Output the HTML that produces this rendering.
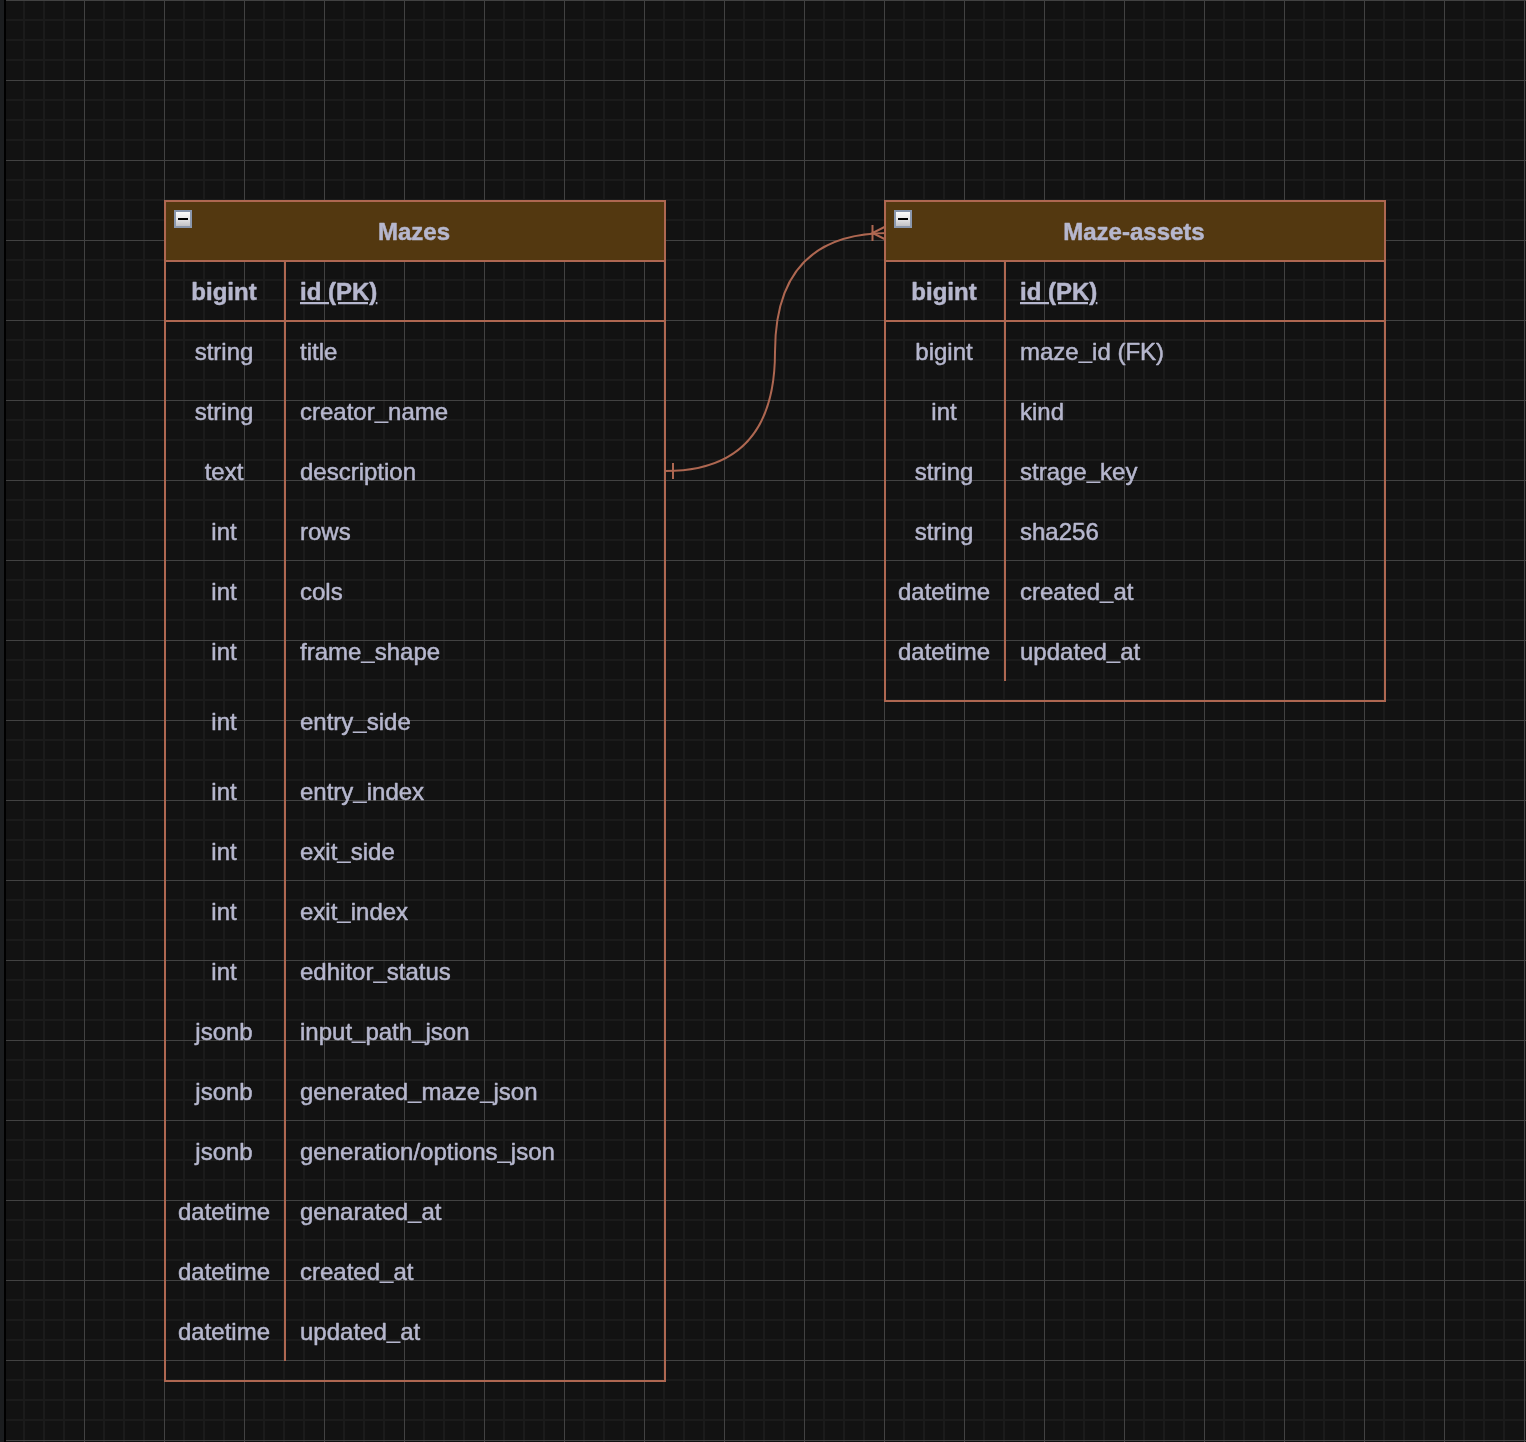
<!DOCTYPE html>
<html><head><meta charset="utf-8"><title>ER</title>
<style>
html,body{margin:0;padding:0;background:#121212;width:1526px;height:1442px;overflow:hidden}
svg{display:block;position:absolute;left:0;top:0;will-change:transform}
text{font-family:"Liberation Sans",sans-serif;font-size:24px;fill:#b6b7ce;stroke:#b6b7ce;stroke-width:0.5px;stroke-linejoin:round}
</style></head><body>
<svg width="1526" height="1442" viewBox="0 0 1526 1442">
<defs>
<pattern id="grid" x="4" y="0" width="80" height="80" patternUnits="userSpaceOnUse">
<path d="M0 20H80M0 40H80M0 60H80M20 0V80M40 0V80M60 0V80" fill="none" stroke="#424242" stroke-width="2" opacity="0.2" shape-rendering="crispEdges"/>
<path d="M0 0.5H80M0.5 0V80" fill="none" stroke="#424242" stroke-width="1" shape-rendering="crispEdges"/>
</pattern>
<linearGradient id="ig" x1="0" y1="0" x2="0" y2="1"><stop offset="0" stop-color="#fbfbfb"/><stop offset="0.45" stop-color="#e9e9ea"/><stop offset="1" stop-color="#c2c2c6"/></linearGradient>
</defs>
<rect x="0" y="0" width="1526" height="1442" fill="#121212"/>
<rect x="0" y="0" width="1526" height="1442" fill="url(#grid)"/>
<rect x="0" y="0" width="4" height="1442" fill="#1b1d1f"/>
<rect x="4" y="0" width="2" height="1442" fill="#000"/>
<g fill="none" stroke="#ae6751" stroke-width="2">
<path d="M665 471Q775 471 775 352Q775 233 888.5 233"/>
<path d="M673 463V479"/>
<path d="M872.5 225V241M888.5 225L872.5 233L888.5 241"/>
</g>
<rect x="165" y="201" width="500" height="60" fill="#533810" stroke="none"/>
<rect x="165" y="201" width="500" height="1180" fill="none" stroke="#ae6751" stroke-width="2"/>
<path d="M165 261H665M165 321H665M285 261V1361" fill="none" stroke="#ae6751" stroke-width="2"/>
<g transform="translate(174,210)"><rect x="0" y="0" width="18" height="18" fill="#8a97ad"/><rect x="2" y="2" width="14" height="14" fill="url(#ig)"/><rect x="4" y="8" width="10" height="2" fill="#000"/></g>
<text x="414.0" y="240" text-anchor="middle" font-weight="bold">Mazes</text>
<text x="224" y="300" text-anchor="middle" font-weight="bold">bigint</text>
<text x="300" y="300" font-weight="bold">id (PK)</text>
<path d="M300 302h29v2.3h-29zM338 302h30v2.3h-30zM375.8 302h1.6v2.3h-1.6z" fill="#b6b7ce"/>
<text x="224" y="360" text-anchor="middle">string</text>
<text x="300" y="360">title</text>
<text x="224" y="420" text-anchor="middle">string</text>
<text x="300" y="420">creator<tspan dy="-1.7" stroke-width="0.15">_</tspan><tspan dy="1.7">name</tspan></text>
<text x="224" y="480" text-anchor="middle">text</text>
<text x="300" y="480">description</text>
<text x="224" y="540" text-anchor="middle">int</text>
<text x="300" y="540">rows</text>
<text x="224" y="600" text-anchor="middle">int</text>
<text x="300" y="600">cols</text>
<text x="224" y="660" text-anchor="middle">int</text>
<text x="300" y="660">frame<tspan dy="-1.7" stroke-width="0.15">_</tspan><tspan dy="1.7">shape</tspan></text>
<text x="224" y="730" text-anchor="middle">int</text>
<text x="300" y="730">entry<tspan dy="-1.7" stroke-width="0.15">_</tspan><tspan dy="1.7">side</tspan></text>
<text x="224" y="800" text-anchor="middle">int</text>
<text x="300" y="800">entry<tspan dy="-1.7" stroke-width="0.15">_</tspan><tspan dy="1.7">index</tspan></text>
<text x="224" y="860" text-anchor="middle">int</text>
<text x="300" y="860">exit<tspan dy="-1.7" stroke-width="0.15">_</tspan><tspan dy="1.7">side</tspan></text>
<text x="224" y="920" text-anchor="middle">int</text>
<text x="300" y="920">exit<tspan dy="-1.7" stroke-width="0.15">_</tspan><tspan dy="1.7">index</tspan></text>
<text x="224" y="980" text-anchor="middle">int</text>
<text x="300" y="980">edhitor<tspan dy="-1.7" stroke-width="0.15">_</tspan><tspan dy="1.7">status</tspan></text>
<text x="224" y="1040" text-anchor="middle">jsonb</text>
<text x="300" y="1040">input<tspan dy="-1.7" stroke-width="0.15">_</tspan><tspan dy="1.7">path</tspan><tspan dy="-1.7" stroke-width="0.15">_</tspan><tspan dy="1.7">json</tspan></text>
<text x="224" y="1100" text-anchor="middle">jsonb</text>
<text x="300" y="1100">generated<tspan dy="-1.7" stroke-width="0.15">_</tspan><tspan dy="1.7">maze</tspan><tspan dy="-1.7" stroke-width="0.15">_</tspan><tspan dy="1.7">json</tspan></text>
<text x="224" y="1160" text-anchor="middle">jsonb</text>
<text x="300" y="1160">generation/options<tspan dy="-1.7" stroke-width="0.15">_</tspan><tspan dy="1.7">json</tspan></text>
<text x="224" y="1220" text-anchor="middle">datetime</text>
<text x="300" y="1220">genarated<tspan dy="-1.7" stroke-width="0.15">_</tspan><tspan dy="1.7">at</tspan></text>
<text x="224" y="1280" text-anchor="middle">datetime</text>
<text x="300" y="1280">created<tspan dy="-1.7" stroke-width="0.15">_</tspan><tspan dy="1.7">at</tspan></text>
<text x="224" y="1340" text-anchor="middle">datetime</text>
<text x="300" y="1340">updated<tspan dy="-1.7" stroke-width="0.15">_</tspan><tspan dy="1.7">at</tspan></text>
<rect x="885" y="201" width="500" height="60" fill="#533810" stroke="none"/>
<rect x="885" y="201" width="500" height="500" fill="none" stroke="#ae6751" stroke-width="2"/>
<path d="M885 261H1385M885 321H1385M1005 261V681" fill="none" stroke="#ae6751" stroke-width="2"/>
<g transform="translate(894,210)"><rect x="0" y="0" width="18" height="18" fill="#8a97ad"/><rect x="2" y="2" width="14" height="14" fill="url(#ig)"/><rect x="4" y="8" width="10" height="2" fill="#000"/></g>
<text x="1134.0" y="240" text-anchor="middle" font-weight="bold">Maze-assets</text>
<text x="944" y="300" text-anchor="middle" font-weight="bold">bigint</text>
<text x="1020" y="300" font-weight="bold">id (PK)</text>
<path d="M1020 302h29v2.3h-29zM1058 302h30v2.3h-30zM1095.8 302h1.6v2.3h-1.6z" fill="#b6b7ce"/>
<text x="944" y="360" text-anchor="middle">bigint</text>
<text x="1020" y="360">maze<tspan dy="-1.7" stroke-width="0.15">_</tspan><tspan dy="1.7">id (FK)</tspan></text>
<text x="944" y="420" text-anchor="middle">int</text>
<text x="1020" y="420">kind</text>
<text x="944" y="480" text-anchor="middle">string</text>
<text x="1020" y="480">strage<tspan dy="-1.7" stroke-width="0.15">_</tspan><tspan dy="1.7">key</tspan></text>
<text x="944" y="540" text-anchor="middle">string</text>
<text x="1020" y="540">sha256</text>
<text x="944" y="600" text-anchor="middle">datetime</text>
<text x="1020" y="600">created<tspan dy="-1.7" stroke-width="0.15">_</tspan><tspan dy="1.7">at</tspan></text>
<text x="944" y="660" text-anchor="middle">datetime</text>
<text x="1020" y="660">updated<tspan dy="-1.7" stroke-width="0.15">_</tspan><tspan dy="1.7">at</tspan></text>
</svg>
</body></html>
